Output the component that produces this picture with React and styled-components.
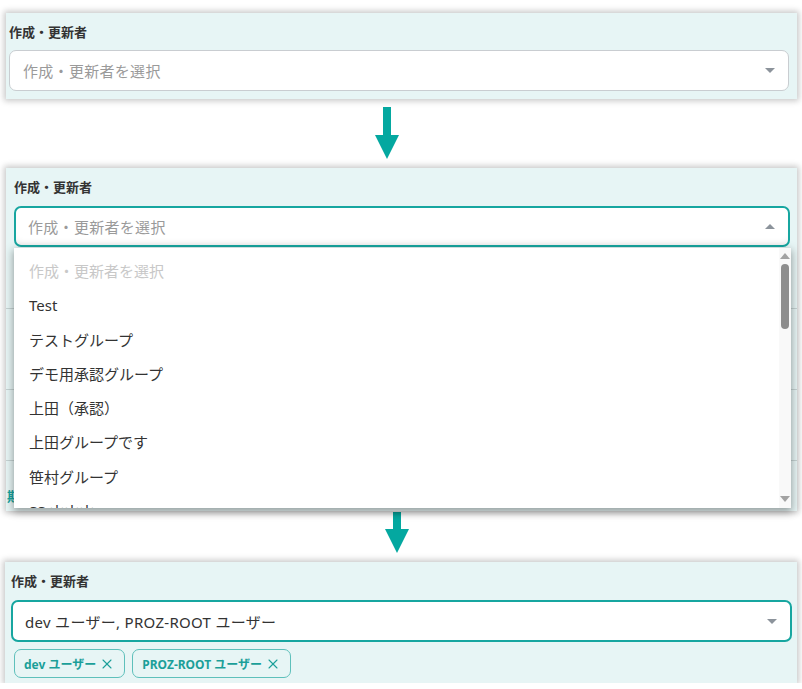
import React from "react"
import styled, { createGlobalStyle } from "styled-components"
import { X } from "lucide-react"

const teal = "#17a6a0"
const panelBg = "#e7f5f5"

const GlobalStyle = createGlobalStyle`
  html, body {
    margin: 0;
    background: #ffffff;
  }
  body {
    font-family: "Noto Sans", "Noto Sans CJK JP", sans-serif;
    color: #333333;
  }
`

const Stage = styled.div`
  display: flex;
  flex-direction: column;
  width: 791px;
  padding: 13px 0 0 6px;
`

const Panel = styled.section`
  position: relative;
  display: flex;
  flex-direction: column;
  background: ${panelBg};
  box-shadow: 0 0 6px 2px rgba(0, 0, 0, 0.22);
  margin-left: ${p => p.$shift || 0}px;
  padding: 10px ${p => p.$right}px ${p => p.$bottom}px ${p => p.$left}px;
`

const Label = styled.div`
  font-size: 13px;
  font-weight: 700;
  line-height: 18px;
  color: #333333;
  margin-bottom: ${p => p.$gap || 10}px;
`

const SelectWrap = styled.div`
  position: relative;
`

const SelectBox = styled.div`
  display: flex;
  align-items: center;
  justify-content: space-between;
  box-sizing: border-box;
  height: ${p => p.$height || 41}px;
  padding: 0 13px 0 ${p => (p.$active ? 12 : 13)}px;
  background: #ffffff;
  border: ${p => (p.$active ? `2px solid ${teal}` : "1px solid #c9cdd1")};
  border-radius: 7px;
  box-shadow: ${p => (p.$open ? "inset 0 -6px 6px -4px rgba(0,0,0,0.08)" : "none")};
  font-size: 15px;
  color: ${p => (p.$filled ? "#333333" : "#9a9a9a")};
  letter-spacing: 0.3px;
`

const Caret = styled.span`
  width: 0;
  height: 0;
  border-left: 5px solid transparent;
  border-right: 5px solid transparent;
  ${p => (p.$up ? "border-bottom" : "border-top")}: 5px solid #8c939b;
`

const Dropdown = styled.div`
  position: absolute;
  top: calc(100% + 1px);
  left: 0;
  right: -1px;
  height: 260px;
  display: flex;
  background: #ffffff;
  box-shadow: 0 3px 8px 1px rgba(0, 0, 0, 0.35);
  z-index: 10;
`

const Options = styled.ul`
  flex: 1;
  margin: 0;
  padding: 6px 0 0;
  list-style: none;
  overflow: hidden;
`

const Option = styled.li`
  height: 34.3px;
  line-height: 34.3px;
  padding-left: 15px;
  font-size: 15px;
  color: ${p => (p.$muted ? "#c8c8c8" : "#333333")};
  white-space: nowrap;
`

const ScrollRail = styled.div`
  width: 12px;
  display: flex;
  flex-direction: column;
  align-items: center;
  background: #f9f9f9;
  padding: 5px 0 6px;
  box-sizing: border-box;
`

const RailArrow = styled.span`
  width: 0;
  height: 0;
  border-left: 5px solid transparent;
  border-right: 5px solid transparent;
  ${p => (p.$down ? "border-top" : "border-bottom")}: 6px solid #a3a3a3;
  margin-top: ${p => (p.$down ? "auto" : "0")};
`

const Thumb = styled.span`
  width: 8px;
  height: 65px;
  margin-top: 5px;
  border-radius: 4px;
  background: #8d8d8d;
`

const FieldRow = styled.div`
  box-sizing: border-box;
  height: ${p => p.$height}px;
  margin: 0 -7px 0 -8px;
  padding: ${p => p.$pad || 0}px 0 0 1px;
  border-bottom: ${p => (p.$line ? "1px solid #c5d3d3" : "none")};
  font-size: 13px;
  font-weight: 700;
  color: ${teal};
`

const Chips = styled.div`
  display: flex;
  gap: 7px;
  margin-top: 7px;
  padding-left: 3px;
`

const Chip = styled.span`
  display: inline-flex;
  align-items: center;
  gap: 3px;
  height: 29px;
  box-sizing: border-box;
  padding: 0 9px 0 9px;
  border: 1px solid #5ec0bb;
  border-radius: 7px;
  font-size: 12px;
  font-weight: 700;
  color: #1b9f99;
  svg {
    margin-top: 1px;
  }
`

const ArrowRow = styled.div`
  display: flex;
  padding-left: ${p => p.$offset}px;
  margin: ${p => p.$top}px 0 ${p => p.$bottom}px;
`

const DownArrow = ({ shaft }) => (
  <svg width="24" height={shaft + 24} viewBox={`0 0 24 ${shaft + 24}`}>
    <rect x="8" y="0" width="8" height={shaft} fill="#04a8a0" />
    <polygon points={`0,${shaft} 24,${shaft} 12,${shaft + 24}`} fill="#04a8a0" />
  </svg>
)

const placeholder = "作成・更新者を選択"

const groups = [
  "Test",
  "テストグループ",
  "デモ用承認グループ",
  "上田（承認）",
  "上田グループです",
  "笹村グループ",
  "SS ホホホ",
]

const App = () => {
  return (
    <>
      <GlobalStyle />
      <Stage>
        <Panel $left={3} $right={8} $bottom={8}>
          <Label $gap={9}>作成・更新者</Label>
          <SelectBox>
            <span>{placeholder}</span>
            <Caret />
          </SelectBox>
        </Panel>

        <ArrowRow $offset={369} $top={8} $bottom={9}>
          <DownArrow shaft={28} />
        </ArrowRow>

        <Panel $left={8} $right={7} $bottom={0}>
          <Label $gap={10}>作成・更新者</Label>
          <SelectWrap>
            <SelectBox $active $open>
              <span>{placeholder}</span>
              <Caret $up />
            </SelectBox>
            <Dropdown>
              <Options>
                <Option $muted>{placeholder}</Option>
                {groups.map(name => (
                  <Option key={name}>{name}</Option>
                ))}
              </Options>
              <ScrollRail>
                <RailArrow />
                <Thumb />
                <RailArrow $down />
              </ScrollRail>
            </Dropdown>
          </SelectWrap>
          <FieldRow $height={62} $line />
          <FieldRow $height={81} $line />
          <FieldRow $height={71} $line />
          <FieldRow $height={50} $pad={25}>
            期間
          </FieldRow>
        </Panel>

        <ArrowRow $offset={379} $top={1} $bottom={9}>
          <DownArrow shaft={17} />
        </ArrowRow>

        <Panel $shift={-1} $left={6} $right={5} $bottom={5}>
          <Label $gap={10}>作成・更新者</Label>
          <SelectBox $active $filled $height={42}>
            <span>dev ユーザー, PROZ-ROOT ユーザー</span>
            <Caret />
          </SelectBox>
          <Chips>
            <Chip>
              dev ユーザー
              <X size={16} strokeWidth={1.6} />
            </Chip>
            <Chip>
              PROZ-ROOT ユーザー
              <X size={16} strokeWidth={1.6} />
            </Chip>
          </Chips>
        </Panel>
      </Stage>
    </>
  )
}

export default App
